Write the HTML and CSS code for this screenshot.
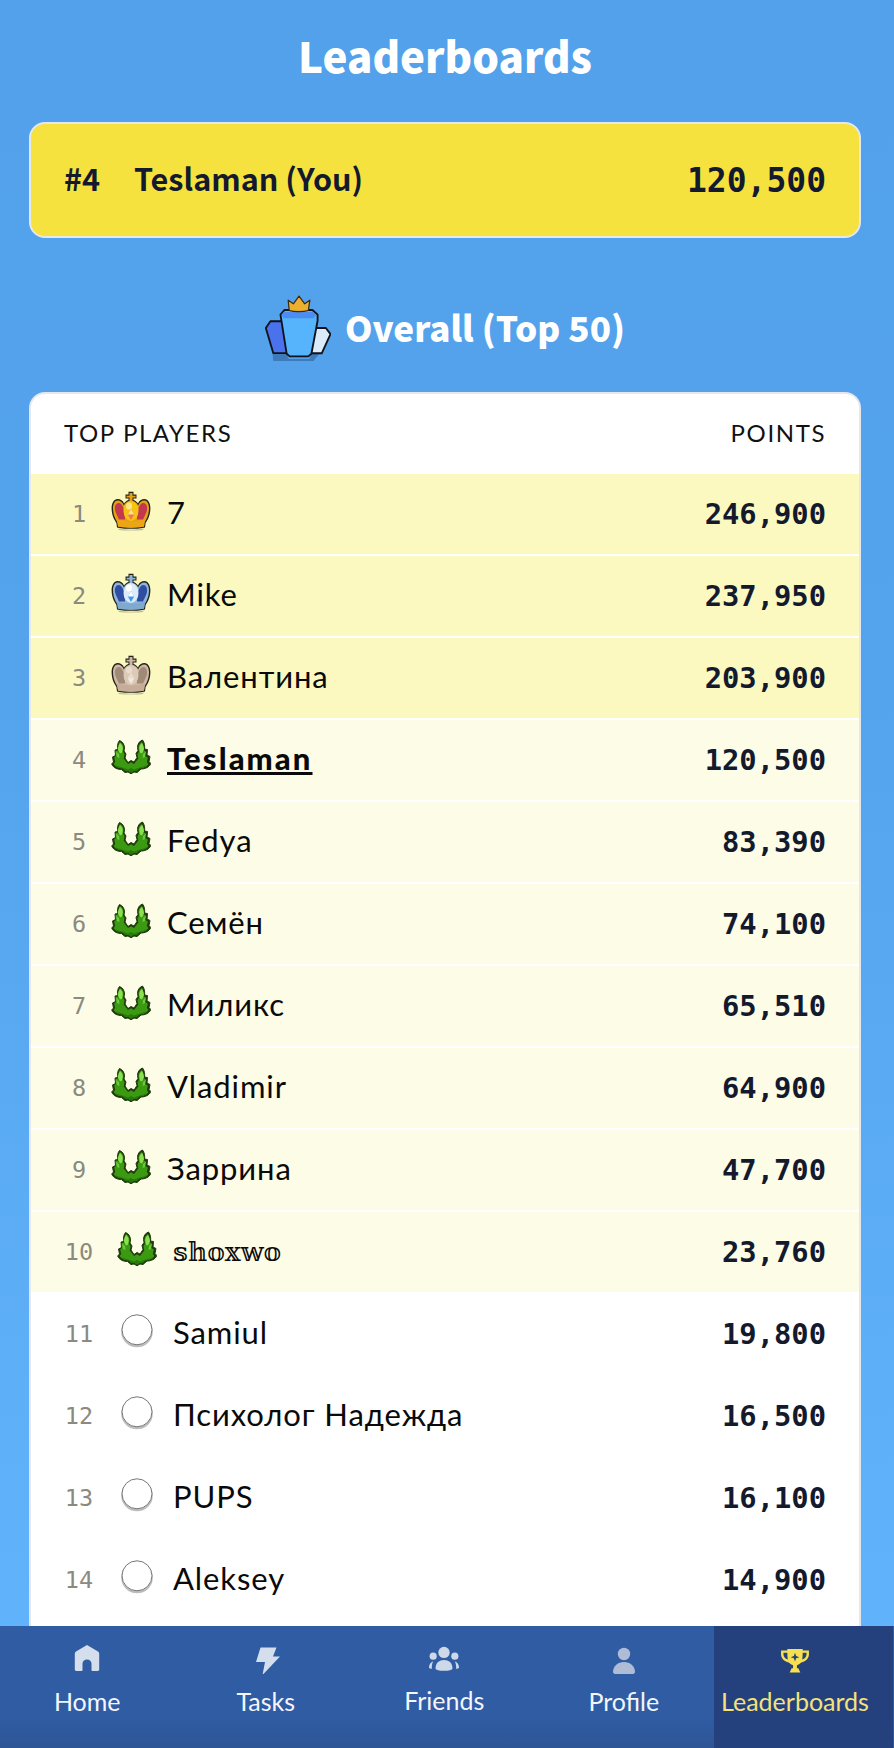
FILE: index.html
```html
<!DOCTYPE html>
<html lang="en">
<head>
<meta charset="utf-8">
<title>Leaderboards</title>
<link rel="stylesheet" href="styles.css">
</head>
<body>
<svg class="defs" width="0" height="0" aria-hidden="true">
  <defs>
    <symbol id="crown" viewBox="0 0 40 40">
      <path d="M6 36.500l-.6-4.500-2.400-4C1.500 25 .6 21 .6 17 .6 12 3 8 6.500 8c3 0 5.500 1.500 6.500 4.500 1-1.500 2.500-3 4.500-3.500V7.500h-3V3.500h3V.8h5v2.700h3v4h-3V9c2 .5 3.500 2 4.500 3.500C28 9.500 30.500 8 33.500 8c3.500 0 5.900 4 5.900 9 0 4-.9 8-2.400 11l-2.400 4-.6 4.500c-5 1.800-23 1.800-28 0z" fill="#23231c"/>
      <path d="M7 35.500l-.5-4-2-3.500C3 25 2 21 2 17c0-4 2-7.500 4.500-7.500 3 0 5.500 2 6.300 5C14 12 16 10.500 18.500 10V6.500h-3V4.700h3V2h3v2.700h3v1.800h-3V10c2.500.5 4.500 2 5.700 4.500.8-3 3.300-5 6.300-5C36 9.500 38 13 38 17c0 4-1 8-2.500 11l-2 3.500-.5 4c-5 1.500-21 1.500-26 0z" fill="var(--edge)"/>
      <path d="M8 12c-3.500 0-4.500 3.500-4 7 .5 3 2.500 6 4 9.500h6C14 22 12.500 12.500 8 12zM32 12c3.500 0 4.500 3.500 4 7-.5 3-2.500 6-4 9.500h-6c0-6.500 1.500-16 6-16.500z" fill="var(--inner)"/>
      <ellipse cx="20" cy="20" rx="7.500" ry="10" fill="var(--orb)"/>
      <ellipse cx="18" cy="15" rx="3" ry="3.500" fill="var(--shine)"/>
      <path d="M6 28.500c8 2.500 20 2.500 28 0l-1 7c-5 1.500-21 1.500-26 0z" fill="var(--band)"/>
      <path d="M20 18l3.200 5.500L20 29l-3.200-5.500z" fill="var(--gem)"/>
      <path d="M20 18l3.200 5.500H16.800z" fill="var(--shine)"/>
      <path d="M7 37.500c5 1.500 21 1.500 26 0l-1 1.500c-5 .8-19 .8-24 0z" fill="#00000040"/>
    </symbol>
    <symbol id="laurel" viewBox="0 0 40 34">
      <path d="M8.500.5c3 1 5 4 5 7.500l-.5 3 2 3-1 4 3 4.500L20 20.500l3 1.500 3-4.500-1-4 2-3-.5-3c0-3.500 2-6.500 5-7.500 2 2.500 2.500 6 2 9l3 .5-.5 5.500 3 1.500-1 5 1.800 2c-1.500 4-6 5.500-9.800 5.500L26 32.500l-3-.5-3 1.800-3-1.800-3 .5-3.500-3c-3.800 0-8.300-1.500-9.800-5.500L2.500 22l-1-5 3-1.500L4 10l3-.5C6 6.500 6.500 3 8.500.5z" fill="#1f3c0c" stroke="#1f3c0c" stroke-width="1" stroke-linejoin="round"/>
      <path d="M9 2c2.500 1.500 3.500 3.500 3.500 6l-.5 3.500 1.500 3-.8 4L17 24l3-1.800 3 1.800 4.300-5.500-.8-4 1.500-3-.5-3.500c0-2.500 1-4.500 3.500-6 1.500 2.500 1.500 5 1 8.500l2.500.5-.5 5 2.800 1.500-1 4.500 1.500 2c-1.500 3-5.500 4.200-8.800 4.200L25.500 31l-2.700-.3-2.800 1.800-2.800-1.800-2.700.3-3-2.800c-3.300 0-7.300-1.200-8.800-4.200l1.500-2-1-4.500L5 16l-.5-5 2.500-.5C6.500 7 7.500 4.500 9 2z" fill="#3c9a12"/>
      <path d="M9 3c2 1.500 2.800 3.500 2.800 5.500l-.8 4-2 1L7 9.500C7 7 7.800 5 9 3zM31 3c-2 1.500-2.800 3.500-2.800 5.500l.8 4 2 1 2-4c0-2.500-.8-4.500-2-6.500z" fill="#8ae04e"/>
      <path d="M5 11.500l3 2.500.5 4-2.500-1zM35 11.500L32 14l-.5 4 2.500-1z" fill="#67cb3a"/>
      <path d="M4 25c4 2 7 2.500 9 3l4 1.500 3-1.500 3 1.500 4-1.500c2-.5 5-1 9-3-1.500 2.500-5 3.300-8 3.300L25.500 31l-2.700-.3-2.800 1.800-2.800-1.800-2.700.3-2.500-2.700c-3 0-6.500-.8-8-3.300z" fill="#267a08"/>
    </symbol>
    <symbol id="disc" viewBox="0 0 40 40">
      <circle cx="20" cy="20.500" r="15.800" fill="#bdbdbd"/>
      <circle cx="20" cy="18.800" r="15" fill="#fff" stroke="#777" stroke-width="1"/>
    </symbol>
  </defs>
</svg>

<main class="page">
  <h1 class="title">Leaderboards</h1>

  <section class="you">
    <span class="you-rank">#4</span>
    <span class="you-name">Teslaman (You)</span>
    <span class="you-points">120,500</span>
  </section>

  <h2 class="section-title">
    <svg class="podium" viewBox="0 0 64 64" aria-hidden="true">
      <path d="M7 54h13l3 8h20l3-8h9l-8 10H8z" fill="#1d3f6e" opacity=".4"/>
      <path d="M44 32h15l4.500 6L55 56.500H44z" fill="#dcebfa" stroke="#10131c" stroke-width="1.800" stroke-linejoin="round"/>
      <path d="M0.800 32l4.500-6.500H22v30.800H8z" fill="#4a72ec" stroke="#10131c" stroke-width="1.800" stroke-linejoin="round"/>
      <path d="M15 19l4-4.500h27l5 4.500v6l-6 32-3 2.500H24l-3-2.500z" fill="#55b4fb" stroke="#10131c" stroke-width="1.800" stroke-linejoin="round"/>
      <path d="M18 16.500h29l2.500 3-2.500 3H18l-2-3z" fill="#4b8df0"/>
      <path d="M22.500 5l5 3.500L33 1l5.500 7.500 5-3.500-1.500 10c-5 1.500-14 1.500-18.500 0z" fill="#eeaf2e" stroke="#3a2a10" stroke-width="1.200" stroke-linejoin="round"/>
    </svg>
    <span>Overall (Top 50)</span>
  </h2>

  <section class="board">
    <header class="board-head">
      <span>TOP PLAYERS</span>
      <span>POINTS</span>
    </header>
    <ol class="rows">
      <li class="row tier-top">
        <span class="rank">1</span>
        <svg class="badge crown crown-gold"><use href="#crown"/></svg>
        <span class="name">7</span>
        <span class="points">246,900</span>
      </li>
      <li class="row tier-top">
        <span class="rank">2</span>
        <svg class="badge crown crown-blue"><use href="#crown"/></svg>
        <span class="name">Mike</span>
        <span class="points">237,950</span>
      </li>
      <li class="row tier-top">
        <span class="rank">3</span>
        <svg class="badge crown crown-tan"><use href="#crown"/></svg>
        <span class="name">Валентина</span>
        <span class="points">203,900</span>
      </li>
      <li class="row tier-mid">
        <span class="rank">4</span>
        <svg class="badge"><use href="#laurel"/></svg>
        <span class="name me">Teslaman</span>
        <span class="points">120,500</span>
      </li>
      <li class="row tier-mid">
        <span class="rank">5</span>
        <svg class="badge"><use href="#laurel"/></svg>
        <span class="name">Fedya</span>
        <span class="points">83,390</span>
      </li>
      <li class="row tier-mid">
        <span class="rank">6</span>
        <svg class="badge"><use href="#laurel"/></svg>
        <span class="name">Семён</span>
        <span class="points">74,100</span>
      </li>
      <li class="row tier-mid">
        <span class="rank">7</span>
        <svg class="badge"><use href="#laurel"/></svg>
        <span class="name">Миликс</span>
        <span class="points">65,510</span>
      </li>
      <li class="row tier-mid">
        <span class="rank">8</span>
        <svg class="badge"><use href="#laurel"/></svg>
        <span class="name">Vladimir</span>
        <span class="points">64,900</span>
      </li>
      <li class="row tier-mid">
        <span class="rank">9</span>
        <svg class="badge"><use href="#laurel"/></svg>
        <span class="name">Заррина</span>
        <span class="points">47,700</span>
      </li>
      <li class="row tier-mid wide">
        <span class="rank">10</span>
        <svg class="badge"><use href="#laurel"/></svg>
        <span class="name fancy">𝕤𝕙𝕠𝕩𝕨𝕠</span>
        <span class="points">23,760</span>
      </li>
      <li class="row wide">
        <span class="rank">11</span>
        <svg class="badge"><use href="#disc"/></svg>
        <span class="name">Samiul</span>
        <span class="points">19,800</span>
      </li>
      <li class="row wide">
        <span class="rank">12</span>
        <svg class="badge"><use href="#disc"/></svg>
        <span class="name">Психолог Надежда</span>
        <span class="points">16,500</span>
      </li>
      <li class="row wide">
        <span class="rank">13</span>
        <svg class="badge"><use href="#disc"/></svg>
        <span class="name">PUPS</span>
        <span class="points">16,100</span>
      </li>
      <li class="row wide">
        <span class="rank">14</span>
        <svg class="badge"><use href="#disc"/></svg>
        <span class="name">Aleksey</span>
        <span class="points">14,900</span>
      </li>
    </ol>
  </section>
</main>

<nav class="tabbar">
  <a class="tab">
    <svg class="tab-icon" viewBox="0 0 30 30" aria-hidden="true"><path d="M15 1L26 7.500c.8.500 1.200 1.200 1.200 2.200V25.500c0 .9-.7 1.500-1.700 1.500h-5c-.6 0-1-.4-1-1v-6.500c0-2.300-1.800-4-4.500-4s-4.500 1.700-4.500 4V26c0 .6-.4 1-1 1h-5c-1 0-1.700-.6-1.700-1.500V9.700C2.800 8.700 3.200 8 4 7.500z"/></svg>
    <span>Home</span>
  </a>
  <a class="tab">
    <svg class="tab-icon" viewBox="0 0 30 30" aria-hidden="true"><path d="M9.500 3.500h16l-3.500 9h7L11.500 31l2.500-13H5z"/></svg>
    <span>Tasks</span>
  </a>
  <a class="tab">
    <svg class="tab-icon wide-icon" viewBox="0 0 34 30" aria-hidden="true"><circle cx="17" cy="8" r="6"/><circle cx="5.500" cy="12" r="3.800"/><circle cx="28.500" cy="12" r="3.800"/><path d="M8 25c0-6 4-9 9-9s9 3 9 9c0 1.500-4 2.500-9 2.500S8 26.500 8 25z"/><path d="M1 24c.2-3 2-5.500 4.500-6.500-1 2-1.500 4.500-1.500 8-1 0-3-.5-3-1.500zM33 24c-.2-3-2-5.500-4.500-6.500 1 2 1.500 4.500 1.500 8 1 0 3-.5 3-1.500z"/></svg>
    <span class="raised">Friends</span>
  </a>
  <a class="tab nudged">
    <svg class="tab-icon dimmer" viewBox="0 0 30 30" aria-hidden="true"><circle cx="15" cy="10" r="6.200"/><path d="M4 28c0-6 5-10 11-10s11 4 11 10c0 1-1 1.800-2 2H6c-1 -.2-2-1-2-2z"/></svg>
    <span>Profile</span>
  </a>
  <a class="tab active">
    <svg class="tab-icon trophy" viewBox="0 0 30 26" aria-hidden="true"><path fill-rule="evenodd" d="M7 0h16v1.500h6.500v4c0 4-3 7.500-8 8.500-1.500 1.500-3 2.500-4.500 3v3h1.500l2 4.500H9.500l2-4.500H13v-3c-1.500-.5-3-1.500-4.500-3-5-1-8-4.500-8-8.500v-4H7zM3 4V5.500c0 2.500 1.700 4.500 4.500 5.500C7.200 9 7 6.500 7 4zm24 0h-4c0 2.500-.2 5-.5 7C25.300 10 27 8 27 5.500zM15 4l1.200 3.300L19.500 8.500l-3.300 1.200L15 13l-1.200-3.300L10.500 8.500l3.300-1.200z"/></svg>
    <span>Leaderboards</span>
  </a>
</nav>
</body>
</html>
```
FILE: styles.css
```css
* { box-sizing: border-box; }

html, body {
  margin: 0;
  height: 100%;
}

body {
  height: 1748px;
  overflow: hidden;
  background: linear-gradient(180deg, #52a1ea 0%, #54a4ed 40%, #62b5fd 100%);
  font-family: "Lato", "Noto Sans", sans-serif;
  color: #0a0a0a;
}

.defs { position: absolute; }

.page {
  width: 890px;
  display: flex;
  flex-direction: column;
  padding: 0 29px;
}

.title {
  margin: 27px 0 0;
  height: 57px;
  line-height: 56px;
  text-align: center;
  font-family: "Noto Sans CJK SC", "Noto Sans", sans-serif;
  font-size: 42px;
  font-weight: 900;
  color: #fff;
}

.you {
  margin-top: 38px;
  height: 116px;
  display: flex;
  align-items: center;
  padding: 0 33px;
  background: #f6e23e;
  border: 2px solid #e5e7eb;
  border-radius: 16px;
  color: #131a2e;
  font-family: "Noto Sans CJK SC", "Noto Sans", sans-serif;
  font-size: 30.600px;
  font-weight: 700;
}

.you-rank { width: 70px; margin-top: -4px; }
.you-name { flex: 1; margin-top: -4px; }

.you-points,
.points {
  font-family: "DejaVu Sans Mono", monospace;
  font-weight: 700;
  color: #131a2e;
}

.you-points { font-size: 33px; }

.section-title {
  margin: 54px 0 0;
  height: 72px;
  display: flex;
  align-items: center;
  justify-content: center;
  gap: 14px;
  font-family: "Noto Sans CJK SC", "Noto Sans", sans-serif;
  font-size: 35px;
  font-weight: 900;
  color: #fff;
}

.section-title span { margin-top: -4px; }

.podium { width: 66px; height: 66px; flex: none; }

.board {
  margin-top: 28px;
  padding-bottom: 40px;
  background: #fff;
  border: 2px solid #e5e7eb;
  border-bottom: 0;
  border-radius: 16px 16px 0 0;
  overflow: hidden;
}

.board-head {
  height: 80px;
  display: flex;
  align-items: center;
  justify-content: space-between;
  padding: 0 33px 4px;
  font-size: 24px;
  letter-spacing: 1.600px;
  color: #111;
}

.rows {
  margin: 0;
  padding: 0;
  list-style: none;
}

.row {
  height: 82px;
  display: flex;
  align-items: center;
  padding: 0 33px;
  border-bottom: 2px solid #fff;
}

.tier-top { background: #fbf9c0; }
.tier-mid { background: #fdfce6; }

.rank {
  width: 30px;
  flex: none;
  text-align: center;
  font-family: "DejaVu Sans Mono", monospace;
  font-size: 23.500px;
  color: #8a8a80;
}

.badge {
  width: 40px;
  height: 40px;
  margin: -6px 16px 0 17px;
  flex: none;
}

.wide .badge { margin-left: 23px; }

.crown-gold { --edge: #e7a012; --inner: #c1384f; --orb: #f7c313; --band: #eca514; --gem: #f4724f; --shine: #ffe68a; }
.crown-blue { --edge: #8db6da; --inner: #2f4ea3; --orb: #dcebf8; --band: #7fa9cf; --gem: #3f9bf0; --shine: #fff; }
.crown-tan { --edge: #cfb7a3; --inner: #9f8a78; --orb: #dccab6; --band: #c7ad99; --gem: #f1e9e1; --shine: #e9dccd; }

.name {
  flex: 1;
  font-size: 31px;
  letter-spacing: .9px;
  white-space: nowrap;
  margin-top: -4px;
}

.me {
  font-weight: 900;
  letter-spacing: 2.100px;
  text-decoration: underline;
}

.fancy {
  font-family: "DejaVu Serif", "DejaVu Sans", serif;
  font-size: 26.500px;
  letter-spacing: 0;
  margin-top: -2px;
}

.points { font-size: 28.800px; }

.tabbar {
  position: fixed;
  left: 0;
  right: 0;
  bottom: 0;
  height: 122px;
  display: grid;
  grid-template-columns: repeat(4, 178.500px) 179px;
  background: linear-gradient(180deg, #305ca4 0%, #305ca4 75%, #2e5595 100%);
  font-size: 25px;
}

.tab {
  display: flex;
  flex-direction: column;
  align-items: center;
  padding: 18px 4px 0 0;
  color: #f3f6fb;
}

.nudged { padding-right: 2px; }

.tab-icon {
  width: 30px;
  height: 30px;
  margin-bottom: 12px;
  fill: #d5deec;
}

.tab-icon.wide-icon { width: 32px; fill: #cdd8e9; }
.tab-icon.dimmer { fill: #aebcd6; }
.tab-icon.trophy { margin-top: 5px; height: 25px; margin-bottom: 12px; }

.raised { margin-top: -1px; }

.active {
  padding-right: 17px;
  background: #25417d;
  color: #f4e27a;
}

.active .tab-icon { fill: #f7e04f; }
```
